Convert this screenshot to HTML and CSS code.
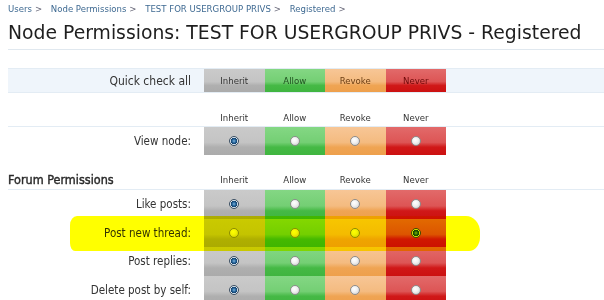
FILE: index.html
```html
<!DOCTYPE html>
<html>
<head>
<title>Node Permissions</title>
<link rel="stylesheet" href="styles.css">
</head>
<body>

<div class="crumbs">
  <a href="#">Users</a><span class="sep">&gt;</span>
  <a href="#">Node Permissions</a><span class="sep">&gt;</span>
  <a href="#">TEST FOR USERGROUP PRIVS</a><span class="sep">&gt;</span>
  <a href="#">Registered</a><span class="sep">&gt;</span>
</div>

<h1 class="title">Node Permissions: TEST FOR USERGROUP PRIVS - Registered</h1>

<div class="quick">
  <div class="label">Quick check all</div>
  <div class="cell inherit">Inherit</div>
  <div class="cell allow">Allow</div>
  <div class="cell revoke">Revoke</div>
  <div class="cell never">Never</div>
</div>

<div class="heads">
  <div class="label"></div>
  <div class="head">Inherit</div>
  <div class="head">Allow</div>
  <div class="head">Revoke</div>
  <div class="head">Never</div>
</div>

<div class="perm first">
  <div class="label">View node:</div>
  <div class="cell inherit"><span class="radio on"></span></div>
  <div class="cell allow"><span class="radio"></span></div>
  <div class="cell revoke"><span class="radio"></span></div>
  <div class="cell never"><span class="radio"></span></div>
</div>

<div class="section">
  <div class="label">Forum Permissions</div>
  <div class="head">Inherit</div>
  <div class="head">Allow</div>
  <div class="head">Revoke</div>
  <div class="head">Never</div>
</div>

<div class="perm">
  <div class="label">Like posts:</div>
  <div class="cell inherit"><span class="radio on"></span></div>
  <div class="cell allow"><span class="radio"></span></div>
  <div class="cell revoke"><span class="radio"></span></div>
  <div class="cell never"><span class="radio"></span></div>
</div>

<div class="perm">
  <div class="label">Post new thread:</div>
  <div class="cell inherit"><span class="radio"></span></div>
  <div class="cell allow"><span class="radio"></span></div>
  <div class="cell revoke"><span class="radio"></span></div>
  <div class="cell never"><span class="radio on"></span></div>
</div>

<div class="perm">
  <div class="label">Post replies:</div>
  <div class="cell inherit"><span class="radio on"></span></div>
  <div class="cell allow"><span class="radio"></span></div>
  <div class="cell revoke"><span class="radio"></span></div>
  <div class="cell never"><span class="radio"></span></div>
</div>

<div class="perm">
  <div class="label">Delete post by self:</div>
  <div class="cell inherit"><span class="radio on"></span></div>
  <div class="cell allow"><span class="radio"></span></div>
  <div class="cell revoke"><span class="radio"></span></div>
  <div class="cell never"><span class="radio"></span></div>
</div>

<!-- highlighter stroke drawn over the row -->
<div class="marker"></div>

</body>
</html>
```

FILE: styles.css
```css
html {
  overflow: hidden;
}

body {
  margin: 0;
  padding-left: 8px;
  background: #fff;
  color: #222;
  font-family: "DejaVu Sans Condensed", "DejaVu Sans", sans-serif;
  position: relative;
}

.crumbs {
  height: 17px;
  line-height: 17px;
  font-size: 9.5px;
}
.crumbs a {
  color: #3f6a92;
  text-decoration: none;
}
.crumbs .sep {
  color: #667;
  margin: 0 6px 0 3px;
}

.title {
  margin: 0;
  padding: 4px 0 4px 0;
  font-family: "DejaVu Sans", sans-serif;
  font-size: 18.8px;
  line-height: 24px;
  font-weight: normal;
  color: #1e1e1e;
  border-bottom: 1px solid #e0e8ef;
}

/* rows */
.quick, .heads, .perm, .section {
  display: flex;
}
.label {
  width: 183px;
  padding-right: 13px;
  text-align: right;
  font-size: 11.5px;
  color: #333;
}
.cell, .head {
  width: 60.5px;
  display: flex;
  align-items: center;
  justify-content: center;
}

.quick {
  margin-top: 18px;
  height: 23px;
  border-top: 1px solid #e3ecf4;
  border-bottom: 1px solid #e3ecf4;
  background: #eff5fb;
  align-items: center;
}
.quick .label {
  font-size: 12px;
}
.quick .cell {
  height: 23px;
  font-size: 9.5px;
}

.heads {
  margin-top: 17px;
  height: 16px;
  line-height: 16px;
}
.head {
  font-size: 9.5px;
  color: #333;
}

.perm {
  height: 28.6px;
  align-items: center;
}
.perm.first {
  height: 28px;
  border-top: 1px solid #e3ecf4;
}
.perm .cell {
  height: 100%;
}

.section {
  padding-top: 16px;
  height: 18px;
  line-height: 18px;
  border-bottom: 1px solid #e3ecf4;
}
.section .label {
  text-align: left;
  font-size: 12.5px;
  -webkit-text-stroke: 0.4px #2a2a2a;
  color: #2a2a2a;
}

/* coloured columns */
.inherit {
  background: linear-gradient(#cacaca 0%, #c4c4c4 55%, #afafaf 72%, #ababab 100%);
  color: #333;
}
.allow {
  background: linear-gradient(#84d784 0%, #74cf74 55%, #45b945 72%, #40b540 100%);
  color: #1f4f1f;
}
.revoke {
  background: linear-gradient(#f7c696 0%, #f4bb80 55%, #efa453 72%, #eea04c 100%);
  color: #6a3d12;
}
.never {
  background: linear-gradient(#e26a6a 0%, #dd5555 55%, #d01818 72%, #cc1111 100%);
  color: #6e0808;
}

.radio {
  width: 8px;
  height: 8px;
  border-radius: 50%;
  border: 1px solid #8d8d8d;
  background: radial-gradient(circle at 40% 35%, #fff 0%, #f2f2f2 40%, #c9c9c9 100%);
}
.radio.on {
  border-color: #3a4e62;
  background: radial-gradient(circle at 50% 50%, #7fb4dc 0%, #1f5f96 35%, #163f66 55%, #dfe8f0 62%, #c9d3dc 100%);
}

.marker {
  position: absolute;
  left: 70px;
  top: 216px;
  width: 410px;
  height: 35px;
  background: #ffff00;
  mix-blend-mode: multiply;
  border-radius: 7px 14px 11px 5px / 9px 16px 14px 8px;
}
```
